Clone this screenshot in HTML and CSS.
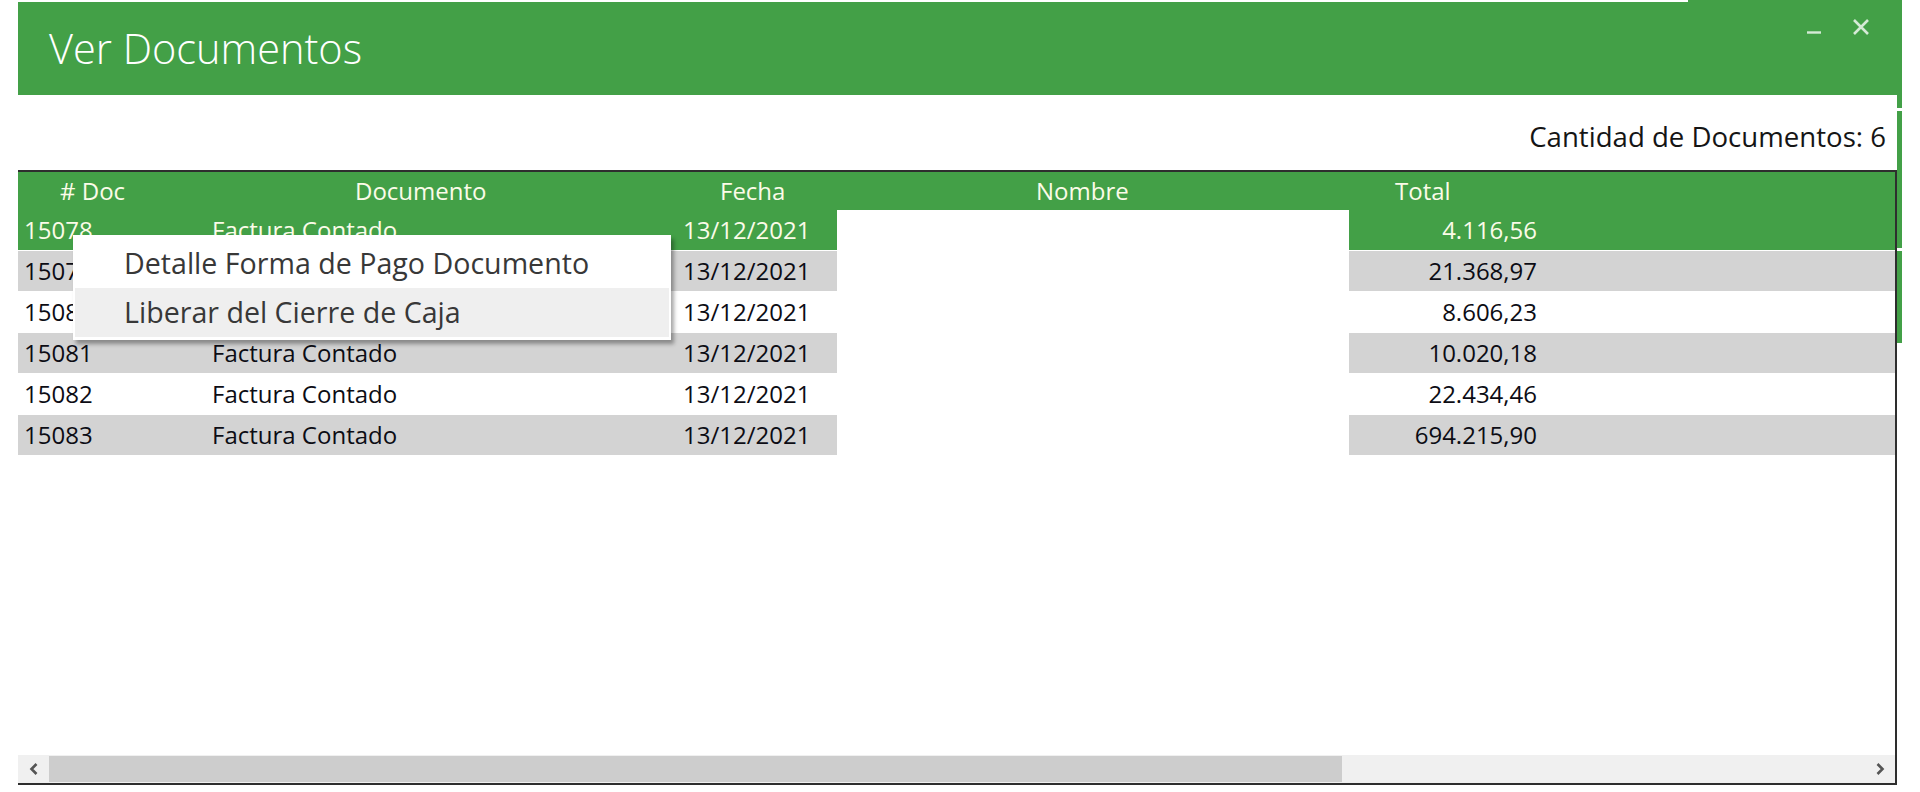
FILE: index.html
```html
<!DOCTYPE html>
<html lang="es">
<head>
<meta charset="utf-8">
<title>Ver Documentos</title>
<link rel="stylesheet" href="styles.css">
</head>
<body>
<div class="window">
  <header class="titlebar">
    <h1 class="title">Ver Documentos</h1>
    <div class="winbtns">
      <svg class="btn-min" width="16" height="16" viewBox="0 0 16 16"><path d="M1 13.5H15" stroke="currentColor" stroke-width="2.4"/></svg>
      <svg class="btn-close" width="18" height="18" viewBox="0 0 18 18"><path d="M2 2L16 16M16 2L2 16" stroke="currentColor" stroke-width="2.6"/></svg>
    </div>
  </header>
  <div class="body">
    <main class="main">
      <div class="count">Cantidad de Documentos: 6</div>
      <section class="grid">
        <div class="thead">
          <div class="th th-doc"># Doc</div>
          <div class="th th-documento">Documento</div>
          <div class="th th-fecha">Fecha</div>
          <div class="th th-nombre">Nombre</div>
          <div class="th th-total">Total</div>
          <div class="th"></div>
        </div>
        <div class="row sel">
          <div class="td">15078</div><div class="td">Factura Contado</div><div class="td">13/12/2021</div><div class="td name"></div><div class="td num">4.116,56</div><div class="td"></div>
        </div>
        <div class="row alt">
          <div class="td">15079</div><div class="td">Factura Contado</div><div class="td">13/12/2021</div><div class="td name"></div><div class="td num">21.368,97</div><div class="td"></div>
        </div>
        <div class="row">
          <div class="td">15080</div><div class="td">Factura Contado</div><div class="td">13/12/2021</div><div class="td name"></div><div class="td num">8.606,23</div><div class="td"></div>
        </div>
        <div class="row alt">
          <div class="td">15081</div><div class="td">Factura Contado</div><div class="td">13/12/2021</div><div class="td name"></div><div class="td num">10.020,18</div><div class="td"></div>
        </div>
        <div class="row">
          <div class="td">15082</div><div class="td">Factura Contado</div><div class="td">13/12/2021</div><div class="td name"></div><div class="td num">22.434,46</div><div class="td"></div>
        </div>
        <div class="row alt">
          <div class="td">15083</div><div class="td">Factura Contado</div><div class="td">13/12/2021</div><div class="td name"></div><div class="td num">694.215,90</div><div class="td"></div>
        </div>
        <div class="spacer"></div>
        <div class="hscroll">
          <div class="arrow"><svg width="12" height="14" viewBox="0 0 12 14"><path d="M8.5 2L3.5 7L8.5 12" fill="none" stroke="#555" stroke-width="2.6"/></svg></div>
          <div class="thumb"></div>
          <div class="track"></div>
          <div class="arrow"><svg width="12" height="14" viewBox="0 0 12 14"><path d="M3.5 2L8.5 7L3.5 12" fill="none" stroke="#555" stroke-width="2.6"/></svg></div>
        </div>
      </section>
      <ul class="menu">
        <li class="item">Detalle Forma de Pago Documento</li>
        <li class="item hover">Liberar del Cierre de Caja</li>
      </ul>
    </main>
    <div class="side"></div>
  </div>
</div>
</body>
</html>
```

FILE: styles.css
```css
* { box-sizing: border-box; }
html, body { margin: 0; padding: 0; }
body {
  background: #ffffff;
  width: 1920px;
  height: 792px;
  overflow: hidden;
  font-family: "Open Sans", "Noto Sans", sans-serif;
}
.window {
  position: relative;
  margin-left: 18px;
  width: 1884px;
  padding-top: 2px;
}
.window::before {
  content: "";
  position: absolute;
  top: 0;
  right: 0;
  width: 214px;
  height: 2px;
  background: #43a047;
}
.titlebar {
  height: 93px;
  background: #43a047;
  display: flex;
  justify-content: space-between;
  align-items: flex-start;
}
.title {
  margin: 0;
  padding-left: 31px;
  padding-top: 20px;
  font-weight: 300;
  font-size: 41.5px;
  line-height: 52px;
  color: #ffffff;
}
.winbtns {
  display: flex;
  gap: 30px;
  padding-top: 16px;
  padding-right: 32px;
  color: rgba(255, 255, 255, 0.78);
}
.btn-min { margin-top: 1px; }
.body {
  display: flex;
  align-items: flex-start;
}
.main {
  position: relative;
  width: 1879px;
}
.side {
  width: 5px;
  height: 248px;
  background: linear-gradient(#43a047 0 13px, #fff 13px 16px, #43a047 16px 153px, #fff 153px 156px, #43a047 156px);
}
.count {
  height: 75px;
  text-align: right;
  padding-right: 11px;
  padding-top: 22px;
  font-size: 27.6px;
  line-height: 38px;
  color: #151515;
}
.grid {
  height: 615px;
  border-top: 2px solid #2e2e2e;
  border-right: 2px solid #2e2e2e;
  border-bottom: 2px solid #2e2e2e;
  display: flex;
  flex-direction: column;
  font-size: 24px;
}
.thead, .row {
  display: grid;
  grid-template-columns: 188px 471px 160px 512px 191px 1fr;
}
.thead {
  height: 38px;
  background: #43a047;
  color: #fbfbe8;
}
.th {
  line-height: 38px;
  white-space: nowrap;
}
.th-doc { padding-left: 42px; }
.th-documento { padding-left: 149px; }
.th-fecha { padding-left: 43px; }
.th-nombre { padding-left: 199px; }
.th-total { padding-left: 46px; }
.row {
  height: 40px;
  margin-bottom: 1px;
  color: #0c0c14;
}
.row.alt { background: #d3d3d3; }
.row.sel { background: #43a047; color: #fbfbe8; }
.td {
  line-height: 40px;
  padding-left: 6px;
  white-space: nowrap;
}
.td.name { background: #ffffff; }
.td.num {
  text-align: right;
  padding-left: 0;
  padding-right: 3px;
}
.spacer { flex: 1; }
.hscroll {
  height: 28px;
  display: flex;
  background: #f0f0f0;
}
.arrow {
  width: 31px;
  display: flex;
  align-items: center;
  justify-content: center;
}
.thumb {
  width: 1293px;
  background: #cdcdcd;
  margin: 1px 0;
}
.track { flex: 1; }
.menu {
  position: absolute;
  left: 55px;
  top: 140px;
  width: 598px;
  margin: 0;
  padding: 4px 2px 3px;
  list-style: none;
  background: #ffffff;
  box-shadow: 3px 4px 4px rgba(0, 0, 0, 0.35);
  font-size: 28.6px;
  color: #383838;
}
.item {
  height: 49px;
  line-height: 47px;
  padding-left: 49px;
}
.item.hover { background: #efefef; }
```
